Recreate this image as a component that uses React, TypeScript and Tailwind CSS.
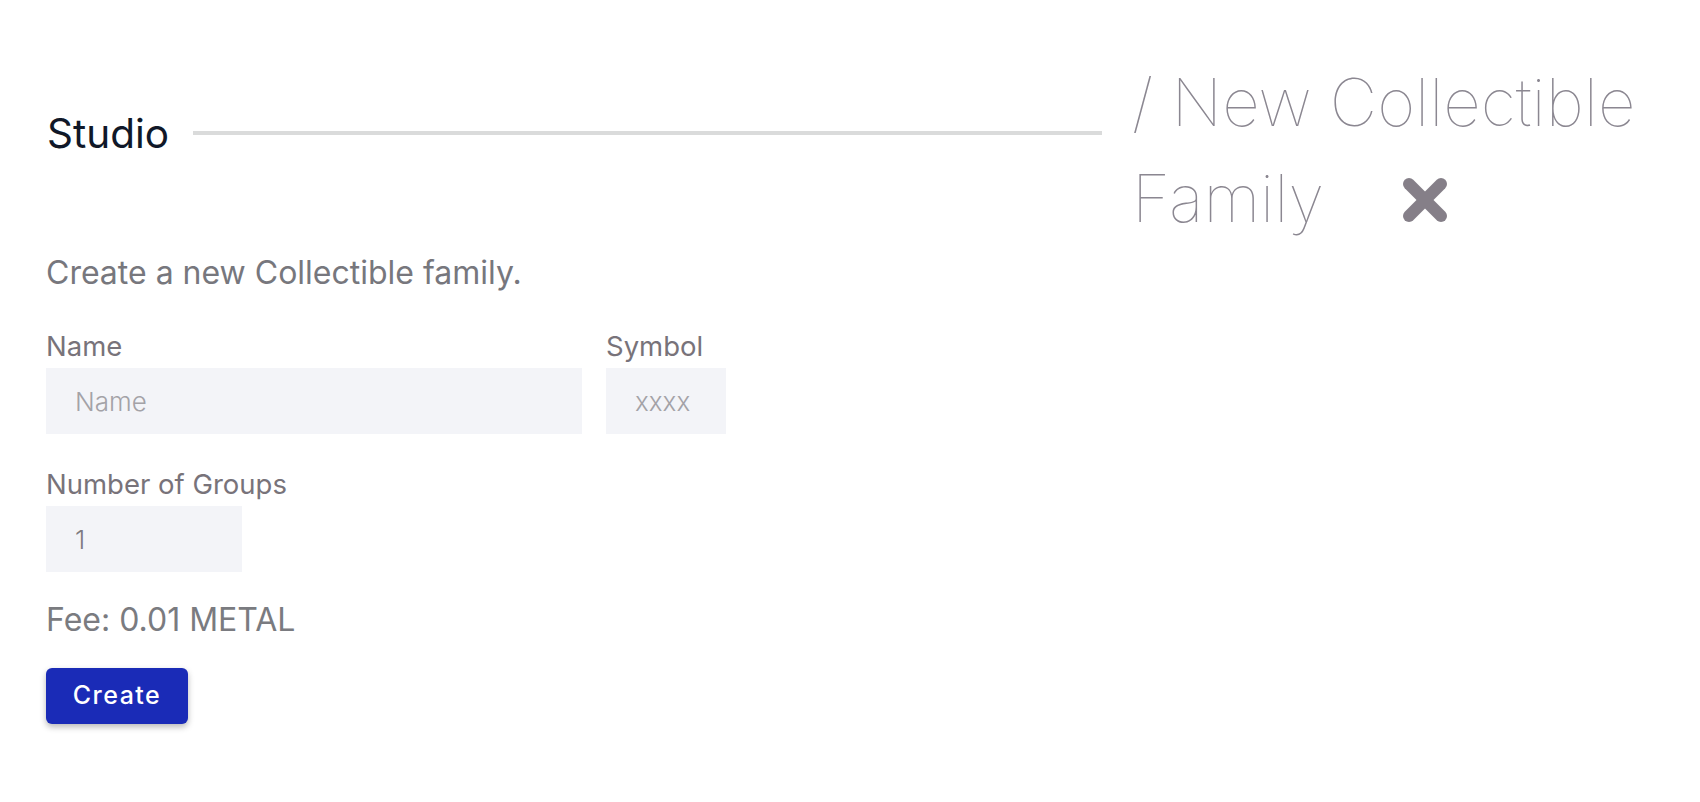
import React from "react";

function CloseIcon() {
  return (
    <svg
      viewBox="0 0 44 44"
      className="inline-block align-baseline w-[44px] h-[44px]"
      fill="none"
      stroke="#857f88"
      strokeWidth={12}
      strokeLinecap="round"
    >
      <line x1="6" y1="6" x2="38" y2="38" />
      <line x1="38" y1="6" x2="6" y2="38" />
    </svg>
  );
}

function Field({
  label,
  placeholder,
  value,
  width,
}: {
  label: string;
  placeholder?: string;
  value?: string;
  width: string;
}) {
  return (
    <div className="flex flex-col">
      <label className="text-[27.5px] leading-[39px] text-[#78737a] mb-[2px]">{label}</label>
      <input
        className={`${width} h-[66px] bg-[#f3f4f8] pl-[29px] text-[26px] text-[#7d7a80] placeholder:text-[#a3a2a7] font-light outline-none`}
        placeholder={placeholder}
        defaultValue={value}
      />
    </div>
  );
}

export default function App() {
  return (
    <div className="min-h-screen bg-white font-['Inter','Liberation_Sans',sans-serif]">
      <div className="px-[46px] pt-[19px]">
        {/* header */}
        <div className="flex items-center">
          <h2 className="text-[40.5px] leading-[57px] text-gray-900 pl-[1px]">Studio</h2>
          <div className="flex-1 h-[4px] bg-[#dadbdb] ml-[24px] mr-[30px]" />
          <div className="w-[522px] shrink-0 pt-[36px]">
            <h1 className="text-[65.5px] leading-[96px] font-thin text-[#8b8791]">
              / New Collectible Family
              <button className="inline-block align-baseline ml-[79px]">
                <CloseIcon />
              </button>
            </h1>
          </div>
        </div>

        {/* form */}
        <p className="mt-[3px] text-[32px] leading-[46px] text-[#77777d]">Create a new Collectible family.</p>

        <div className="mt-[31px] flex gap-[24px]">
          <Field label="Name" placeholder="Name" width="w-[536px]" />
          <Field label="Symbol" placeholder="xxxx" width="w-[120px]" />
        </div>

        <div className="mt-[31px]">
          <Field label="Number of Groups" value="1" width="w-[196px]" />
        </div>

        <p className="mt-[25px] text-[32px] leading-[46px] text-[#7a7b80]">Fee: 0.01 METAL</p>

        <button className="mt-[25px] h-[56px] w-[142px] rounded-[6px] bg-[#1a2bb7] text-white text-[25px] font-medium tracking-[0.06em] shadow-[0_3px_6px_rgba(0,0,0,0.28)]">
          Create
        </button>
      </div>
    </div>
  );
}
